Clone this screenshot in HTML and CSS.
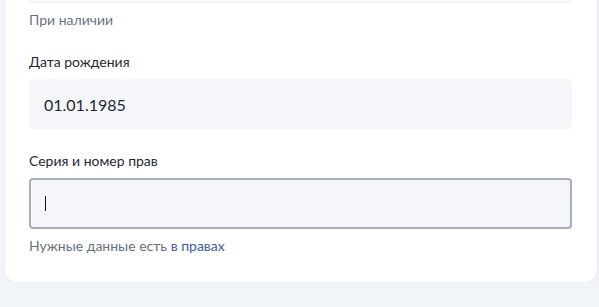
FILE: index.html
```html
<!DOCTYPE html>
<html lang="ru">
<head>
  <meta charset="UTF-8">
  <meta name="viewport" content="width=device-width, initial-scale=1.0">
  <title>Данные водителя</title>
  <link rel="stylesheet" href="styles.css">
</head>
<body>
  <div class="card">
    <div class="field field-prev"></div>
    <p class="hint">При наличии</p>

    <div class="group group-first">
      <label class="label">Дата рождения</label>
      <div class="field">01.01.1985</div>
    </div>

    <div class="group">
      <label class="label">Серия и номер прав</label>
      <div class="field field-focus"><span class="caret"></span></div>
      <p class="hint hint-under">Нужные данные есть <a href="#">в правах</a></p>
    </div>
  </div>
</body>
</html>
```

FILE: styles.css
```css
:root {
  --bg: #f1f4f9;
  --card: #ffffff;
  --field: #f4f6fa;
  --text: #1e2833;
  --muted: #66727f;
  --link: #3b5b9d;
  --border-focus: #a4aec3;
}
body {
  margin: 0;
  background: var(--bg);
  font-family: Lato, "Noto Sans", sans-serif;
  color: var(--text);
  overflow: hidden;
}
.card {
  background: var(--card);
  margin: 0 2px 0 5px;
  padding: 0 25px 28px 24px;
  border-radius: 0 0 12px 12px;
  box-shadow: 0 1px 3px rgba(40, 60, 100, 0.06);
}
.field {
  box-sizing: border-box;
  height: 50px;
  background: var(--field);
  border-radius: 4px;
  padding: 0 15px;
  display: flex;
  align-items: center;
  font-size: 16px;
  color: var(--text);
}
.field-prev {
  margin-top: -49px;
  background: var(--card);
  box-shadow: 0 1px 4px rgba(40, 60, 100, 0.12);
}
.field-focus {
  height: 51px;
  border: 2px solid var(--border-focus);
  padding: 0 14px;
}
.caret {
  display: block;
  width: 0;
  height: 15px;
  border-left: 1px solid #111;
}
.hint {
  margin: 11px 0 0;
  font-size: 14px;
  line-height: 16px;
  color: var(--muted);
}
.hint a {
  color: var(--link);
  text-decoration: none;
}
.hint-under {
  margin-top: 9px;
}
.group {
  margin-top: 22px;
}
.group-first {
  margin-top: 24px;
}
.label {
  display: block;
  font-size: 14px;
  line-height: 20px;
  margin-bottom: 7px;
}
```
